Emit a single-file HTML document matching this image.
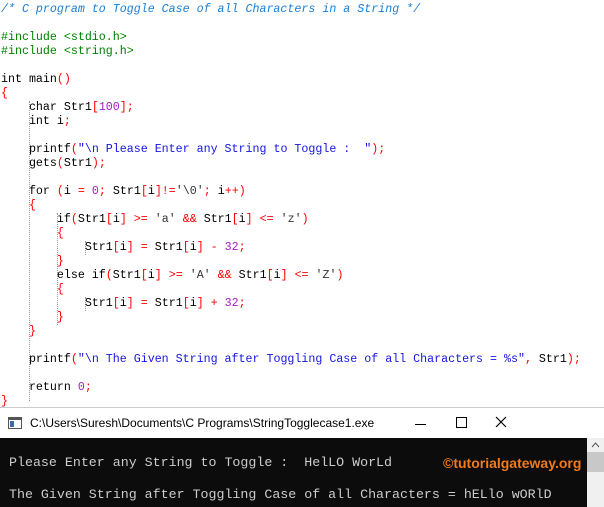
<!DOCTYPE html>
<html><head><meta charset="utf-8"><style>
html,body{margin:0;padding:0;width:604px;height:507px;overflow:hidden;background:#fff;position:relative}
.code{position:absolute;left:1px;top:3px;font-family:"Liberation Mono",monospace;font-size:11.65px;line-height:14px;white-space:pre;color:#000}
.c{color:#1a7fd6;font-style:italic}
.g{color:#008000}
.r{color:#f00}
.n{color:#a020c0}
.s{color:#1515e0}
.ch{color:#333}
.guide{position:absolute;border-left:1px dotted #999;width:0}
.win{position:absolute;left:0;top:407px;width:604px;height:100px;background:#fff;border-top:1px solid #ccc}
.title{position:absolute;left:30px;top:8px;font-family:"Liberation Sans",sans-serif;font-size:12px;color:#000}
.con{position:absolute;left:0;top:30px;width:587px;height:70px;background:#0c0c0c;font-family:"Liberation Mono",monospace;font-size:13.3px;color:#cccccc;white-space:pre}
.sb{position:absolute;left:587px;top:30px;width:17px;height:70px;background:#f0f0f0}
</style></head><body>
<div class="guide" style="left:29px;top:101px;height:300px"></div>
<div class="guide" style="left:57px;top:213px;height:112px"></div>
<div class="guide" style="left:85px;top:241px;height:14px"></div>
<div class="guide" style="left:85px;top:297px;height:14px"></div>
<div class="code"><span class="c">/* C program to Toggle Case of all Characters in a String */</span>

<span class="g">#include &lt;stdio.h&gt;</span>
<span class="g">#include &lt;string.h&gt;</span>

int main<span class="r">()</span>
<span class="r">{</span>
    char Str1<span class="r">[</span><span class="n">100</span><span class="r">];</span>
    int i<span class="r">;</span>

    printf<span class="r">(</span><span class="s">"\n Please Enter any String to Toggle :  "</span><span class="r">);</span>
    gets<span class="r">(</span>Str1<span class="r">);</span>

    for <span class="r">(</span>i <span class="r">=</span> <span class="n">0</span><span class="r">;</span> Str1<span class="r">[</span>i<span class="r">]!=</span><span class="ch">'\0'</span><span class="r">;</span> i<span class="r">++)</span>
    <span class="r">{</span>
        if<span class="r">(</span>Str1<span class="r">[</span>i<span class="r">] &gt;=</span> <span class="ch">'a'</span> <span class="r">&amp;&amp;</span> Str1<span class="r">[</span>i<span class="r">] &lt;=</span> <span class="ch">'z'</span><span class="r">)</span>
        <span class="r">{</span>
            Str1<span class="r">[</span>i<span class="r">] =</span> Str1<span class="r">[</span>i<span class="r">] -</span> <span class="n">32</span><span class="r">;</span>
        <span class="r">}</span>
        else if<span class="r">(</span>Str1<span class="r">[</span>i<span class="r">] &gt;=</span> <span class="ch">'A'</span> <span class="r">&amp;&amp;</span> Str1<span class="r">[</span>i<span class="r">] &lt;=</span> <span class="ch">'Z'</span><span class="r">)</span>
        <span class="r">{</span>
            Str1<span class="r">[</span>i<span class="r">] =</span> Str1<span class="r">[</span>i<span class="r">] +</span> <span class="n">32</span><span class="r">;</span>
        <span class="r">}</span>
    <span class="r">}</span>

    printf<span class="r">(</span><span class="s">"\n The Given String after Toggling Case of all Characters = %s"</span><span class="r">,</span> Str1<span class="r">);</span>

    return <span class="n">0</span><span class="r">;</span>
<span class="r">}</span></div>
<div class="win">
<svg style="position:absolute;left:8px;top:9px" width="14" height="12"><rect x="0.5" y="0.5" width="13" height="11" fill="#fff" stroke="#555"/><rect x="1" y="1" width="12" height="2" fill="#555"/><rect x="2" y="4" width="4" height="6" fill="#3a6ea5"/></svg>
<div class="title">C:\Users\Suresh\Documents\C Programs\StringTogglecase1.exe</div>
<div style="position:absolute;left:415px;top:16px;width:11px;height:1px;background:#000"></div>
<div style="position:absolute;left:456px;top:9px;width:9px;height:9px;border:1px solid #000"></div>
<svg style="position:absolute;left:495px;top:8px" width="12" height="12"><path d="M1 1L11 11M11 1L1 11" stroke="#000" stroke-width="1.2"/></svg>
<div class="con"><span style="position:absolute;left:9px;top:17px">Please Enter any String to Toggle :  HelLO WorLd</span><span style="position:absolute;left:443px;top:17px;color:#f07a1c;font-family:'Liberation Sans',sans-serif;font-weight:bold;font-size:14px">©tutorialgateway.org</span><span style="position:absolute;left:9px;top:49px">The Given String after Toggling Case of all Characters = hELlo wORlD</span></div>
<div class="sb"><div style="position:absolute;left:0;top:14px;width:17px;height:20px;background:#c8c8c8"></div><svg style="position:absolute;left:4px;top:4px" width="9" height="6"><path d="M1 5L4.5 1L8 5" stroke="#555" fill="none"/></svg></div>
</div>
</body></html>
